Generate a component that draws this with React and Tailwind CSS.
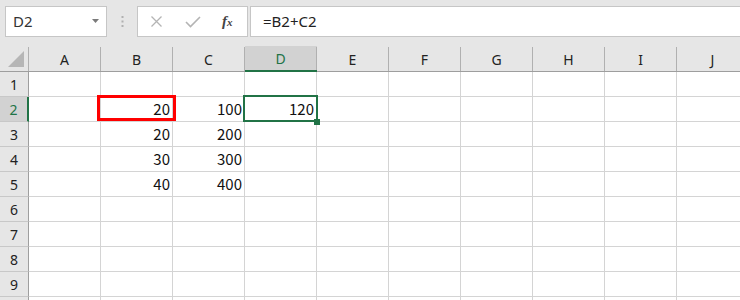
import React from "react";

const COLS = ["A", "B", "C", "D", "E", "F", "G", "H", "I", "J"];
const DATA = {
  2: { B: "20", C: "100", D: "120" },
  3: { B: "20", C: "200" },
  4: { B: "30", C: "300" },
  5: { B: "40", C: "400" },
};
const ROWS = [1, 2, 3, 4, 5, 6, 7, 8, 9, 10];

const uiFont = { fontFamily: '"Noto Sans", "Noto Sans CJK JP", sans-serif' };
const cellFont = { fontFamily: '"Noto Sans CJK JP", "Noto Sans", sans-serif' };

function TopBar() {
  return (
    <div className="h-[46px] bg-[#e6e6e6] flex items-start pt-[6px]">
      <div className="ml-[5px] w-[102px] h-[31px] bg-white border border-[#c6c6c6] flex items-center justify-between pl-[7px] pr-[6px]">
        <span className="text-[15px] text-[#333] leading-none" style={uiFont}>D2</span>
        <svg width="8" height="5" viewBox="0 0 8 5">
          <path d="M0 0 L7 0 L3.5 4 Z" fill="#7a7a7a" />
        </svg>
      </div>
      <div className="w-[30px] h-[31px] flex items-center justify-center">
        <svg width="3" height="11" viewBox="0 0 3 11">
          <rect x="0.5" y="0" width="2" height="2" fill="#b0b0b0" />
          <rect x="0.5" y="4.5" width="2" height="2" fill="#b0b0b0" />
          <rect x="0.5" y="9" width="2" height="2" fill="#b0b0b0" />
        </svg>
      </div>
      <div className="w-[111px] h-[31px] bg-white border border-[#c6c6c6] flex items-center">
        <svg className="ml-[12px]" width="13" height="13" viewBox="0 0 13 13">
          <path d="M1.5 1.5 L11.5 11.5 M11.5 1.5 L1.5 11.5" stroke="#b4b4b4" strokeWidth="1.3" />
        </svg>
        <svg className="ml-[22px]" width="16" height="13" viewBox="0 0 16 13">
          <path d="M1 7 L5.5 11.5 L15 2" stroke="#b4b4b4" strokeWidth="1.6" fill="none" />
        </svg>
        <span
          className="ml-[21px] italic text-[15px] text-[#444] leading-none font-bold"
          style={{ fontFamily: '"Liberation Serif", "DejaVu Serif", serif' }}
        >
          f<span className="text-[11px]">x</span>
        </span>
      </div>
      <div className="ml-[2px] flex-1 h-[31px] bg-white border-y border-l border-[#c6c6c6] flex items-center pl-[12px]">
        <span className="text-[15px] text-[#222] leading-none" style={uiFont}>=B2+C2</span>
      </div>
    </div>
  );
}

function HeaderRow() {
  return (
    <div className="flex h-[26px] bg-[#e6e6e6]">
      <div className="w-[29px] shrink-0 flex flex-col">
        <div className="flex-1 mt-[1px] border-r border-[#b0b0b0] flex items-end justify-end pr-[3px] pb-[3px]">
          <svg width="18" height="18" viewBox="0 0 18 18">
            <path d="M17 1 L17 17 L1 17 Z" fill="#b6b6b6" />
          </svg>
        </div>
        <div className="h-[1px] bg-[#9e9e9e]" />
      </div>
      {COLS.map((c) => {
        const sel = c === "D";
        return (
          <div key={c} className={"w-[72px] shrink-0 flex flex-col " + (sel ? "bg-[#d2d2d2]" : "")}>
            <div
              className={
                "flex-1 mt-[1px] border-r border-[#b0b0b0] flex items-center justify-center text-[14px] " +
                (sel ? "text-[#217346]" : "text-[#222]")
              }
              style={uiFont}
            >
              {c}
            </div>
            {sel ? <div className="h-[2px] bg-[#217346]" /> : <div className="h-[1px] bg-[#9e9e9e]" />}
          </div>
        );
      })}
    </div>
  );
}

function Row({ r }) {
  const sel = r === 2;
  return (
    <div className="flex h-[25px]">
      <div
        className={
          "w-[29px] shrink-0 flex items-center justify-center border-b border-[#c8c8c8] text-[14px] " +
          (sel
            ? "bg-[#d2d2d2] border-r-2 border-r-[#217346] text-[#217346]"
            : "bg-[#e6e6e6] border-r border-r-[#9e9e9e] text-[#222]")
        }
        style={uiFont}
      >
        {r < 10 ? r : null}
      </div>
      {COLS.map((c) => (
        <div
          key={c}
          className="w-[72px] shrink-0 bg-white border-r border-b border-[#d4d4d4] flex items-center justify-end pr-[2px] text-[15px] text-[#111]"
          style={cellFont}
        >
          {DATA[r] && DATA[r][c]}
        </div>
      ))}
    </div>
  );
}

export default function App() {
  return (
    <div className="relative w-[740px] h-[300px] overflow-hidden bg-white">
      <TopBar />
      <HeaderRow />
      {ROWS.map((r) => (
        <Row key={r} r={r} />
      ))}
      <div className="absolute left-[97px] top-[95px] w-[79px] h-[26px] border-[3px] border-[#ff0000]" />
      <div className="absolute left-[243px] top-[95px] w-[75px] h-[27px] border-2 border-[#217346]" />
      <div className="absolute left-[314px] top-[119px] w-[6px] h-[6px] bg-[#217346]" />
    </div>
  );
}
